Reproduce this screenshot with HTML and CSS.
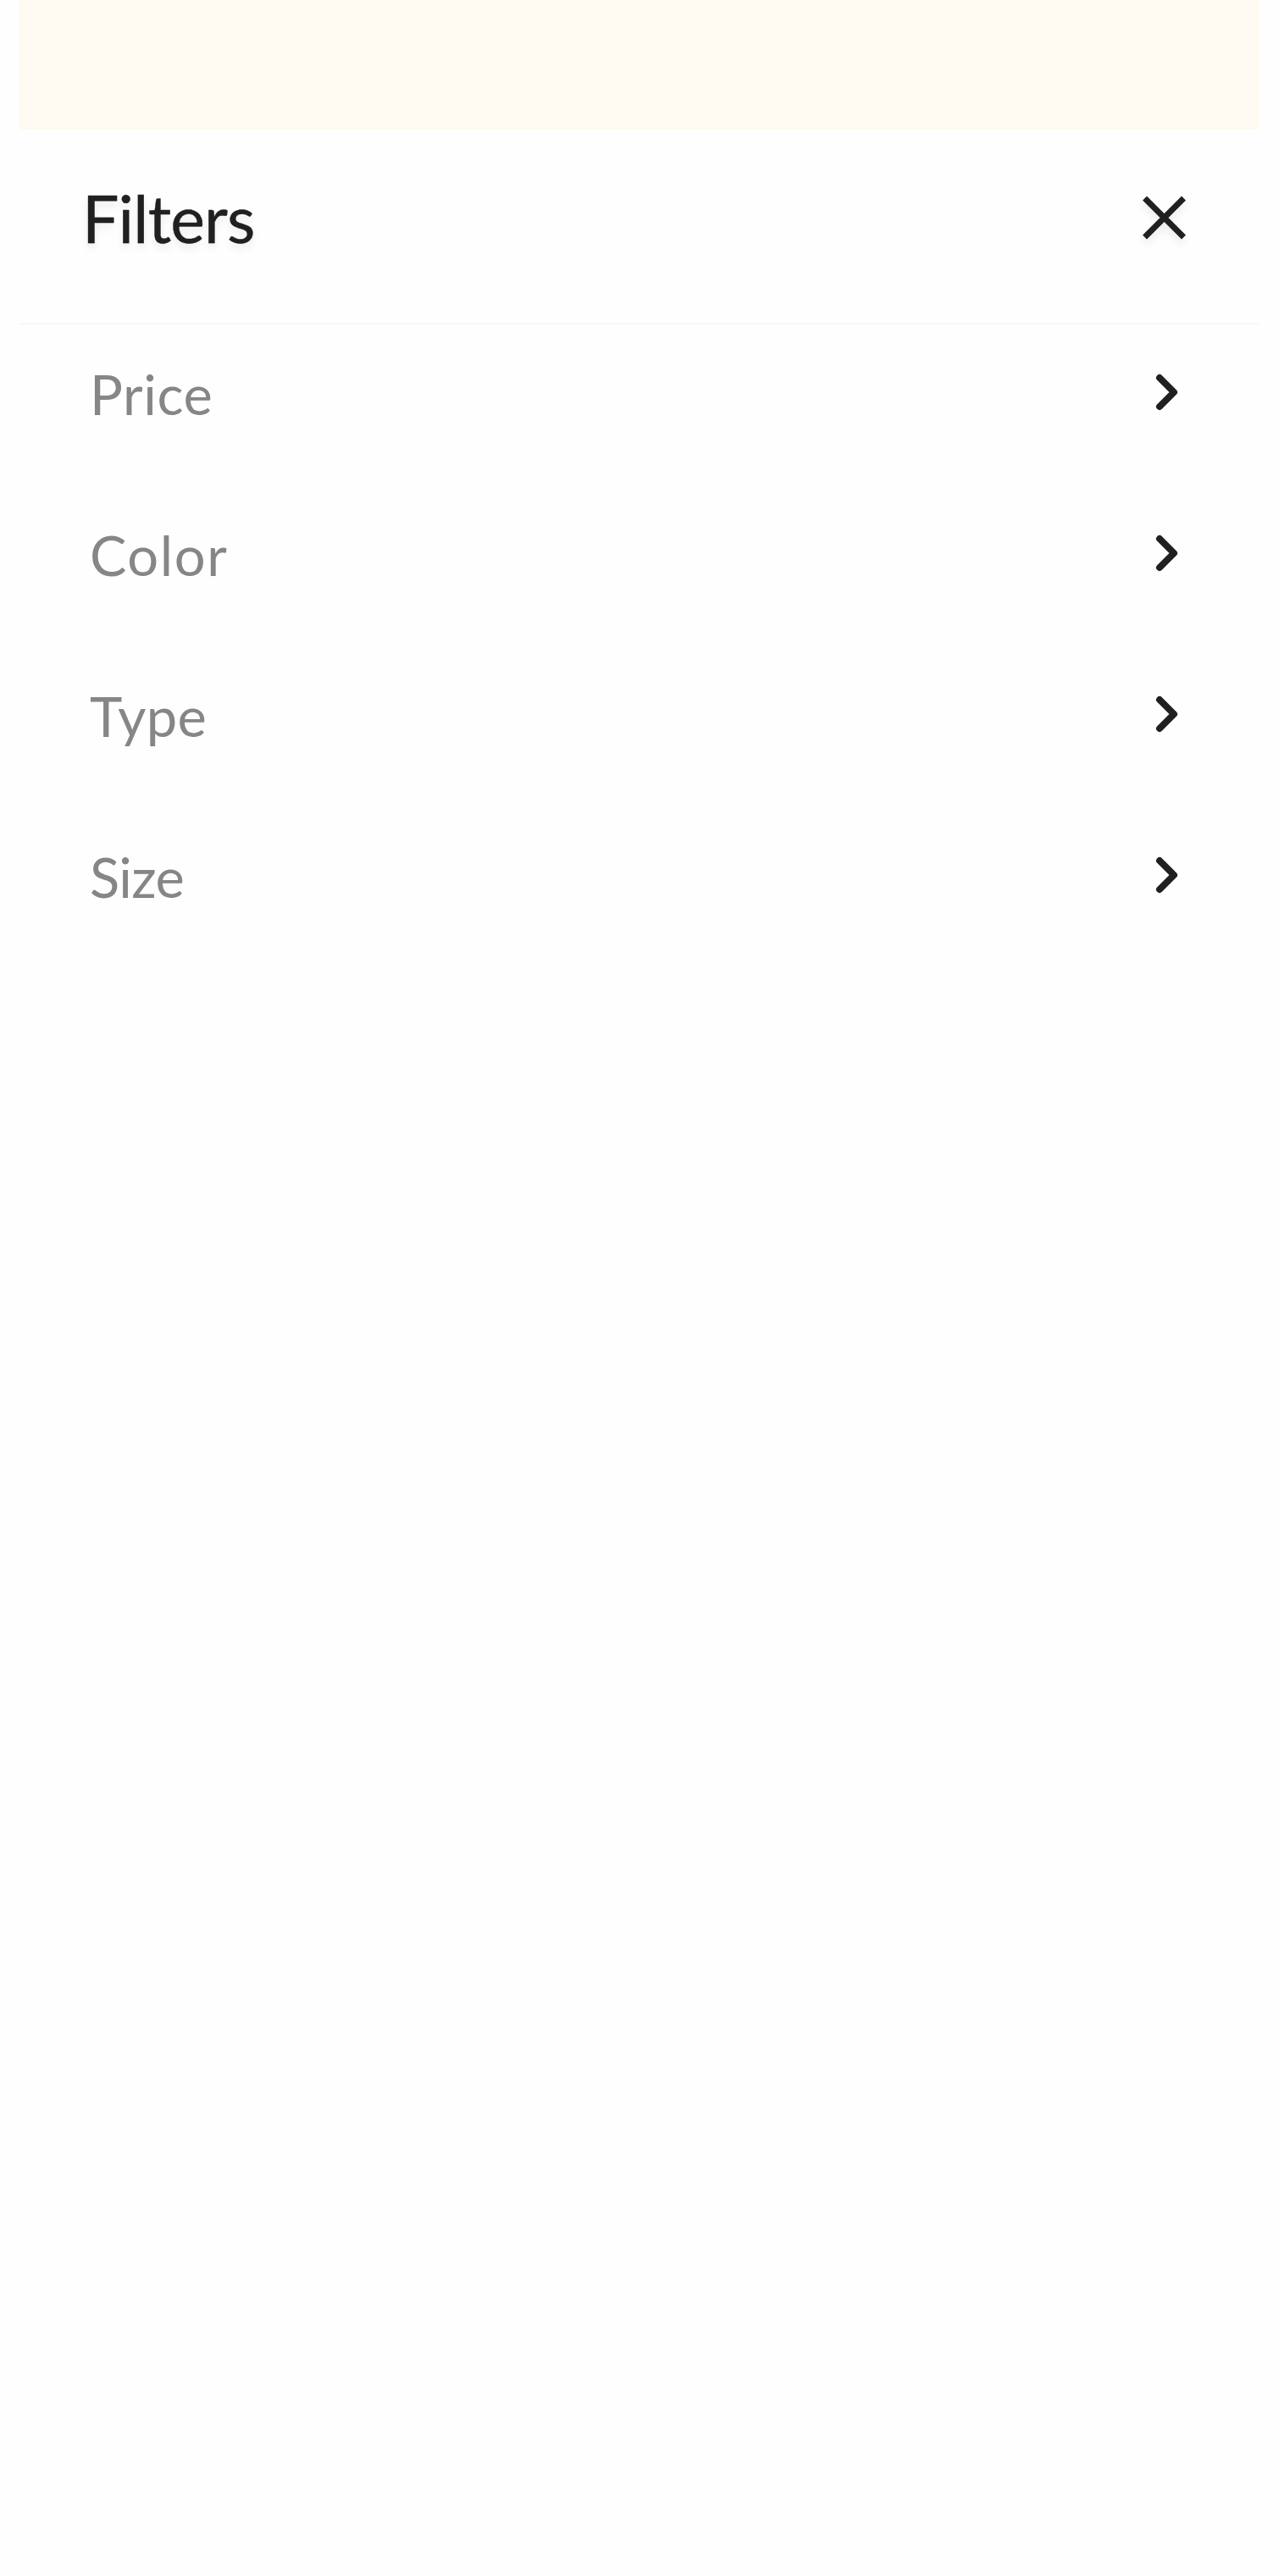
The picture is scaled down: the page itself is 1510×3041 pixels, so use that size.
FILE: index.html
```html
<!DOCTYPE html>
<html lang="en">
<head>
    <meta charset="UTF-8">
    <meta name="viewport" content="width=device-width, initial-scale=1.0">
    <title>Filters</title>
    <link rel="stylesheet" href="styles.css">
</head>
<body>
    <div class="container">
        <div class="top-bar"></div>

        <header class="filters-header">
            <h1>Filters</h1>
            <button class="close-btn" aria-label="Close">
                <svg width="60" height="60" viewBox="0 0 60 60">
                    <path d="M7 7L53 53M53 7L7 53"/>
                </svg>
            </button>
        </header>

        <ul class="filter-list">
            <li class="filter-item">
                <span class="price">Price</span>
                <svg class="chevron" width="34" height="50" viewBox="0 0 34 50"><path d="M8 8L25 25L8 42"/></svg>
            </li>
            <li class="filter-item">
                <span class="color">Color</span>
                <svg class="chevron" width="34" height="50" viewBox="0 0 34 50"><path d="M8 8L25 25L8 42"/></svg>
            </li>
            <li class="filter-item">
                <span class="type">Type</span>
                <svg class="chevron" width="34" height="50" viewBox="0 0 34 50"><path d="M8 8L25 25L8 42"/></svg>
            </li>
            <li class="filter-item">
                <span class="size">Size</span>
                <svg class="chevron" width="34" height="50" viewBox="0 0 34 50"><path d="M8 8L25 25L8 42"/></svg>
            </li>
        </ul>
    </div>
</body>
</html>
```
FILE: styles.css
```css
* {
    margin: 0;
    padding: 0;
    box-sizing: border-box;
}

body {
    font-family: Lato, sans-serif;
    background-color: #fefefe;
    color: #202020;
    min-height: 100vh;
}

.container {
    width: 1463px;
    margin: 0 auto 0 23px;
}

.top-bar {
    height: 153px;
    background-color: #fffaf2;
}

.filters-header {
    display: flex;
    justify-content: space-between;
    align-items: center;
    height: 230px;
    padding: 0 82px 20px 74px;
    border-bottom: 2px solid #f7f7f7;
}

.filters-header h1 {
    font-size: 77px;
    font-weight: 400;
    line-height: 94px;
    letter-spacing: -0.8px;
    -webkit-text-stroke: 0.4px #202020;
    text-shadow: 0 6px 10px rgba(0, 0, 0, 0.08);
}

.close-btn {
    display: flex;
    background: none;
    border: none;
    cursor: pointer;
}

.close-btn svg {
    overflow: visible;
    fill: none;
    stroke: #202020;
    stroke-width: 7;
    filter: drop-shadow(0 6px 5px rgba(0, 0, 0, 0.08));
}

.close-btn path {
    transform: translate(0.5px, 0);
}

.filter-list {
    list-style: none;
}

.filter-item {
    display: flex;
    justify-content: space-between;
    align-items: center;
    height: 190px;
    padding: 0 91px 30px 83px;
    font-size: 65px;
    color: #868686;
    cursor: pointer;
}

.filter-item span {
    padding-top: 4px;
}

.price {
    letter-spacing: 0.6px;
}

.color {
    letter-spacing: 1.6px;
}

.type {
    letter-spacing: 0.3px;
}

.size {
    letter-spacing: -0.6px;
}

.chevron {
    fill: none;
    stroke: #202020;
    stroke-width: 8;
    stroke-linecap: round;
    stroke-linejoin: round;
}
```
